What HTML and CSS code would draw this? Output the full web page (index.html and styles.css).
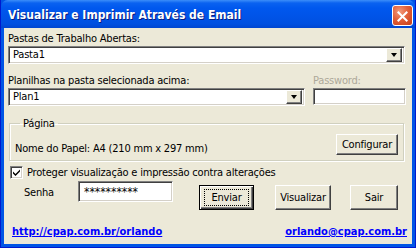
FILE: index.html
```html
<!DOCTYPE html>
<html lang="pt">
<head>
<meta charset="utf-8">
<link rel="stylesheet" href="styles.css">
</head>
<body>
<div class="window">
  <div class="titlebar">
    <span class="title">Visualizar e Imprimir Através de Email</span>
    <span class="close"><svg width="21" height="21" viewBox="0 0 21 21"><path d="M6 6 L15 15 M15 6 L6 15" stroke="#fff" stroke-width="2.2" stroke-linecap="square"/></svg></span>
  </div>
  <div class="client">
    <div class="label">Pastas de Trabalho Abertas:</div>
    <div class="combo wide"><span class="value">Pasta1</span><span class="drop"><i class="arrow"></i></span></div>
    <div class="row2">
      <div class="col">
        <div class="label">Planilhas na pasta selecionada acima:</div>
        <div class="combo mid"><span class="value">Plan1</span><span class="drop"><i class="arrow"></i></span></div>
      </div>
      <div class="col">
        <div class="label disabled">Password:</div>
        <div class="textbox pw"></div>
      </div>
    </div>
    <fieldset class="group">
      <legend>Página</legend>
      <span class="paper">Nome do Papel: A4 (210 mm x 297 mm)</span>
      <span class="btn config">Configurar</span>
    </fieldset>
    <div class="check-row">
      <span class="checkbox"><svg width="9" height="9" viewBox="0 0 9 9"><path d="M1 3.5 L3.5 6 L8 1.5 L8 3.5 L3.5 8 L1 5.5 Z" fill="#000"/></svg></span>
      <span>Proteger visualização e impressão contra alterações</span>
    </div>
    <div class="action-row">
      <span class="senha-label">Senha</span>
      <div class="textbox senha">**********</div>
      <span class="btn default"><span class="focus">Enviar</span></span>
      <span class="btn visualizar">Visualizar</span>
      <span class="btn sair">Sair</span>
    </div>
    <div class="links">
      <a href="#">http://cpap.com.br/orlando</a>
      <a href="#">orlando@cpap.com.br</a>
    </div>
  </div>
</div>
</body>
</html>
```
FILE: styles.css
```css
* { box-sizing: border-box; }
html, body { margin: 0; padding: 0; background: #fff; }
body { width: 416px; height: 248px; overflow: hidden; font-family: "DejaVu Sans Condensed", "DejaVu Sans", sans-serif; font-size: 11px; letter-spacing: -0.2px; color: #000; }

.window {
  width: 416px; height: 248px;
  display: flex; flex-direction: column;
  background: #0055e5;
  border: 1px solid #0019cf;
  border-top: 0;
}
.titlebar {
  height: 28px;
  display: flex; align-items: center; justify-content: space-between;
  padding: 0 2px 0 7px;
  background: linear-gradient(#3c8ef9 0, #0a62f0 3px, #0058ee 8px, #0054e8 16px, #0050e0 24px, #0046d0 28px);
  border-radius: 7px 7px 0 0;
}
.title {
  color: #fff; font-weight: bold; font-size: 12px; letter-spacing: 0;
  text-shadow: 1px 1px 0 #0a1e80;
  margin-top: 1px;
}
.close {
  width: 21px; height: 21px; margin-top: 2px;
  border: 1px solid #fff; border-radius: 3px;
  background: radial-gradient(circle at 35% 30%, #f29a7c 0, #e2603a 45%, #c63d18 100%);
  display: flex;
}
.client {
  flex: 1;
  margin: 0 3px 3px 3px;
  background: #ece9d8;
  padding: 4px 5px 0 4px;
  display: flex; flex-direction: column;
}
.label { height: 13px; line-height: 13px; }
.label.disabled { color: #aca899; }

.combo, .textbox {
  background: #fff;
  border-top: 1px solid #808080; border-left: 1px solid #808080;
  border-right: 1px solid #fff; border-bottom: 1px solid #fff;
  box-shadow: inset 1px 1px 0 #404040, inset -1px -1px 0 #d4d0c8;
  height: 18px;
  display: flex; align-items: center;
}
.combo { margin-top: 1px; }
.combo.wide { width: 397px; }
.combo.mid { width: 297px; }
.value { flex: 1; padding-left: 4px; line-height: 14px; }
.drop {
  width: 16px; height: 14px; margin-right: 2px;
  background: #ece9d8;
  border-top: 1px solid #fff; border-left: 1px solid #fff;
  border-right: 1px solid #404040; border-bottom: 1px solid #404040;
  box-shadow: inset -1px -1px 0 #808080;
  display: flex; align-items: center; justify-content: center;
}
.arrow { width: 0; height: 0; border-left: 3.5px solid transparent; border-right: 3.5px solid transparent; border-top: 4px solid #000; display: block; margin-left: -1px; }

.row2 { display: flex; gap: 8px; margin-top: 10px; }
.col { display: flex; flex-direction: column; }
.textbox.pw { width: 93px; margin-top: 1px; height: 17px; }

.group {
  margin: 11px 3px 0 1px;
  padding: 0 5px 0 8px;
  height: 44px;
  border: 1px solid #d0d0bf;
  box-shadow: inset 1px 1px 0 #fff, 1px 1px 0 #fff;
  display: flex; align-items: flex-start; justify-content: space-between;
}
.group legend { padding: 0 3px; margin-left: 2px; line-height: 13px; }
.paper { margin-top: 12px; margin-left: -3px; }
.config { width: 62px; margin-top: 4px; }

.btn {
  height: 21px; display: inline-flex; align-items: center; justify-content: center;
  background: #ece9d8;
  border-top: 1px solid #fff; border-left: 1px solid #fff;
  border-right: 1px solid #404040; border-bottom: 1px solid #404040;
  box-shadow: inset -1px -1px 0 #808080;
}
.check-row { display: flex; align-items: center; gap: 4px; margin-top: 5px; margin-left: 2px; height: 13px; }
.checkbox {
  width: 13px; height: 13px; background: #fff;
  border-top: 1px solid #808080; border-left: 1px solid #808080;
  border-right: 1px solid #fff; border-bottom: 1px solid #fff;
  box-shadow: inset 1px 1px 0 #404040, inset -1px -1px 0 #d4d0c8;
  display: flex; align-items: center; justify-content: center;
}
.action-row { display: flex; align-items: flex-start; margin-top: 2px; height: 30px; }
.senha-label { margin-left: 16px; width: 54px; margin-top: 5px; }
.textbox.senha { width: 95px; height: 21px; padding-left: 5px; font-size: 12px; letter-spacing: 0; }
.btn.default {
  width: 55px; height: 25px; margin-left: 26px; margin-top: 4px;
  border: 1px solid #000;
  box-shadow: inset 1px 1px 0 #fff, inset -1px -1px 0 #404040, inset -2px -2px 0 #808080;
}
.focus { border: 1px dotted #000; width: 45px; height: 17px; display: flex; align-items: center; justify-content: center; }
.btn.visualizar { width: 56px; height: 25px; margin-top: 4px; margin-left: 21px; }
.btn.sair { width: 48px; height: 25px; margin-top: 4px; margin-left: 19px; }

.links { display: flex; justify-content: space-between; margin-top: 14px; padding: 0 0 0 4px; }
.links a { color: #0000ff; font-weight: bold; font-size: 11px; letter-spacing: 0; text-decoration: underline; }
```
